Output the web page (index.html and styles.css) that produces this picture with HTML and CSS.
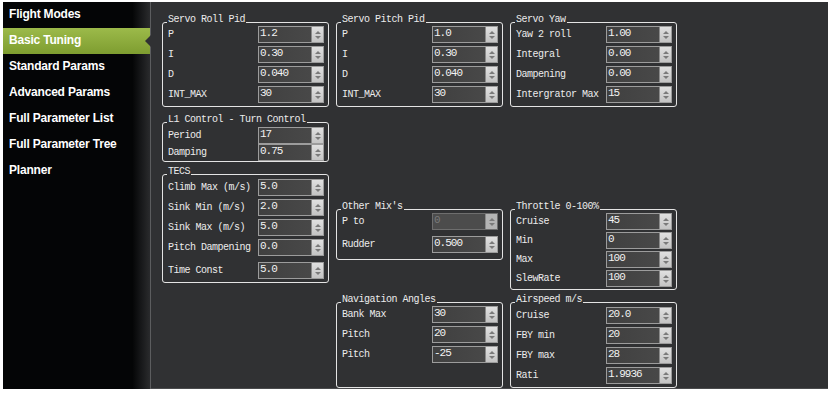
FILE: index.html
```html
<!DOCTYPE html>
<html lang="en">
<head>
  <meta charset="UTF-8">
  <title>Basic Tuning</title>
  <link rel="stylesheet" href="styles.css">
</head>
<body>
  <div class="window">
    <div class="sidebar">
      <div class="item">Flight Modes</div>
      <div class="item active">Basic Tuning</div>
      <div class="item">Standard Params</div>
      <div class="item">Advanced Params</div>
      <div class="item">Full Parameter List</div>
      <div class="item">Full Parameter Tree</div>
      <div class="item">Planner</div>
    </div>

    <div class="panel">
      <div class="col">
        <div class="group pid">
          <span class="title">Servo Roll Pid</span>
          <div class="row"><span class="label">P</span><div class="spinbox"><span class="value">1.2</span><div class="spin"><b class="up"></b><b class="down"></b></div></div></div>
          <div class="row"><span class="label">I</span><div class="spinbox"><span class="value">0.30</span><div class="spin"><b class="up"></b><b class="down"></b></div></div></div>
          <div class="row"><span class="label">D</span><div class="spinbox"><span class="value">0.040</span><div class="spin"><b class="up"></b><b class="down"></b></div></div></div>
          <div class="row"><span class="label">INT_MAX</span><div class="spinbox"><span class="value">30</span><div class="spin"><b class="up"></b><b class="down"></b></div></div></div>
        </div>

        <div class="group l1">
          <span class="title">L1 Control - Turn Control</span>
          <div class="row"><span class="label">Period</span><div class="spinbox"><span class="value">17</span><div class="spin"><b class="up"></b><b class="down"></b></div></div></div>
          <div class="row"><span class="label">Damping</span><div class="spinbox"><span class="value">0.75</span><div class="spin"><b class="up"></b><b class="down"></b></div></div></div>
        </div>

        <div class="group tecs">
          <span class="title">TECS</span>
          <div class="row"><span class="label">Climb Max (m/s)</span><div class="spinbox"><span class="value">5.0</span><div class="spin"><b class="up"></b><b class="down"></b></div></div></div>
          <div class="row"><span class="label">Sink Min (m/s)</span><div class="spinbox"><span class="value">2.0</span><div class="spin"><b class="up"></b><b class="down"></b></div></div></div>
          <div class="row"><span class="label">Sink Max (m/s)</span><div class="spinbox"><span class="value">5.0</span><div class="spin"><b class="up"></b><b class="down"></b></div></div></div>
          <div class="row"><span class="label">Pitch Dampening</span><div class="spinbox"><span class="value">0.0</span><div class="spin"><b class="up"></b><b class="down"></b></div></div></div>
          <div class="row last"><span class="label">Time Const</span><div class="spinbox"><span class="value">5.0</span><div class="spin"><b class="up"></b><b class="down"></b></div></div></div>
        </div>
      </div>

      <div class="col">
        <div class="group pid">
          <span class="title">Servo Pitch Pid</span>
          <div class="row"><span class="label">P</span><div class="spinbox"><span class="value">1.0</span><div class="spin"><b class="up"></b><b class="down"></b></div></div></div>
          <div class="row"><span class="label">I</span><div class="spinbox"><span class="value">0.30</span><div class="spin"><b class="up"></b><b class="down"></b></div></div></div>
          <div class="row"><span class="label">D</span><div class="spinbox"><span class="value">0.040</span><div class="spin"><b class="up"></b><b class="down"></b></div></div></div>
          <div class="row"><span class="label">INT_MAX</span><div class="spinbox"><span class="value">30</span><div class="spin"><b class="up"></b><b class="down"></b></div></div></div>
        </div>

        <div class="group mix">
          <span class="title">Other Mix's</span>
          <div class="row"><span class="label">P to</span><div class="spinbox disabled"><span class="value">0</span><div class="spin"><b class="up"></b><b class="down"></b></div></div></div>
          <div class="row"><span class="label">Rudder</span><div class="spinbox"><span class="value">0.500</span><div class="spin"><b class="up"></b><b class="down"></b></div></div></div>
        </div>

        <div class="group nav">
          <span class="title">Navigation Angles</span>
          <div class="row"><span class="label">Bank Max</span><div class="spinbox"><span class="value">30</span><div class="spin"><b class="up"></b><b class="down"></b></div></div></div>
          <div class="row"><span class="label">Pitch</span><div class="spinbox"><span class="value">20</span><div class="spin"><b class="up"></b><b class="down"></b></div></div></div>
          <div class="row"><span class="label">Pitch</span><div class="spinbox"><span class="value">-25</span><div class="spin"><b class="up"></b><b class="down"></b></div></div></div>
        </div>
      </div>

      <div class="col">
        <div class="group pid">
          <span class="title">Servo Yaw</span>
          <div class="row"><span class="label">Yaw 2 roll</span><div class="spinbox"><span class="value">1.00</span><div class="spin"><b class="up"></b><b class="down"></b></div></div></div>
          <div class="row"><span class="label">Integral</span><div class="spinbox"><span class="value">0.00</span><div class="spin"><b class="up"></b><b class="down"></b></div></div></div>
          <div class="row"><span class="label">Dampening</span><div class="spinbox"><span class="value">0.00</span><div class="spin"><b class="up"></b><b class="down"></b></div></div></div>
          <div class="row"><span class="label">Intergrator Max</span><div class="spinbox"><span class="value">15</span><div class="spin"><b class="up"></b><b class="down"></b></div></div></div>
        </div>

        <div class="group throttle">
          <span class="title">Throttle 0-100%</span>
          <div class="row"><span class="label">Cruise</span><div class="spinbox"><span class="value">45</span><div class="spin"><b class="up"></b><b class="down"></b></div></div></div>
          <div class="row"><span class="label">Min</span><div class="spinbox"><span class="value">0</span><div class="spin"><b class="up"></b><b class="down"></b></div></div></div>
          <div class="row"><span class="label">Max</span><div class="spinbox"><span class="value">100</span><div class="spin"><b class="up"></b><b class="down"></b></div></div></div>
          <div class="row"><span class="label">SlewRate</span><div class="spinbox"><span class="value">100</span><div class="spin"><b class="up"></b><b class="down"></b></div></div></div>
        </div>

        <div class="group airspeed">
          <span class="title">Airspeed m/s</span>
          <div class="row"><span class="label">Cruise</span><div class="spinbox"><span class="value">20.0</span><div class="spin"><b class="up"></b><b class="down"></b></div></div></div>
          <div class="row"><span class="label">FBY min</span><div class="spinbox"><span class="value">20</span><div class="spin"><b class="up"></b><b class="down"></b></div></div></div>
          <div class="row"><span class="label">FBY max</span><div class="spinbox"><span class="value">28</span><div class="spin"><b class="up"></b><b class="down"></b></div></div></div>
          <div class="row last"><span class="label">Rati</span><div class="spinbox"><span class="value">1.9936</span><div class="spin"><b class="up"></b><b class="down"></b></div></div></div>
        </div>
      </div>
    </div>
  </div>
</body>
</html>
```

FILE: styles.css
```css
body {
  margin: 0;
  padding: 2px 0 0 3px;
  background: #fff;
}

.window {
  width: 825px;
  height: 387px;
  display: flex;
  background: #303133;
}

.sidebar {
  width: 147px;
  flex-shrink: 0;
  background: linear-gradient(to right, #040506 88%, #2a2b2d);
  border-right: 1px solid #5c5d5f;
  font-family: "Liberation Sans", Arial, sans-serif;
  font-weight: bold;
  font-size: 12px;
  color: #fff;
}

.item {
  position: relative;
  height: 26px;
  line-height: 25px;
  padding-left: 6px;
  letter-spacing: -0.2px;
}

.item.active {
  background: linear-gradient(#9cba4a, #7e9d30);
}

.item.active::after {
  content: "";
  position: absolute;
  right: -1px;
  top: 7px;
  border-top: 6px solid transparent;
  border-bottom: 6px solid transparent;
  border-right: 6px solid #303133;
}

.panel {
  flex: 1;
  display: flex;
  gap: 7px;
  padding: 20px 0 0 11px;
  border-bottom: 1px solid #4a4b4d;
  font-family: "Liberation Mono", "DejaVu Sans Mono", monospace;
  color: #ececec;
}

.col {
  width: 167px;
  display: flex;
  flex-direction: column;
}

.group {
  position: relative;
  box-sizing: border-box;
  border: 1px solid #e4e4e4;
  border-radius: 3px;
  padding: 3px 4px 0 5px;
  display: flex;
  flex-direction: column;
  gap: 3px;
}

.title {
  position: absolute;
  top: -9px;
  left: 4px;
  padding: 0 1px;
  background: #303133;
  font-size: 10px;
  line-height: 12px;
  letter-spacing: -0.5px;
}

.row {
  display: flex;
  justify-content: space-between;
  height: 17px;
}

.label {
  padding-top: 2px;
  font-size: 10px;
  line-height: 14px;
  letter-spacing: -0.5px;
  white-space: nowrap;
}

.spinbox {
  width: 66px;
  box-sizing: border-box;
  border: 1px solid #9c9c9c;
  background: linear-gradient(to right, #404040, #4a4a4a);
  display: flex;
  justify-content: space-between;
}

.value {
  font-size: 11px;
  line-height: 13px;
  letter-spacing: -1px;
  padding-left: 1px;
  color: #f2f2f2;
}

.spin {
  width: 11px;
  background: linear-gradient(#e0e0e0, #c4c4c4);
  border-left: 1px solid #8a8a8a;
  display: flex;
  flex-direction: column;
  align-items: center;
  justify-content: center;
  gap: 2px;
}

.up,
.down {
  width: 0;
  height: 0;
  border-left: 3px solid transparent;
  border-right: 3px solid transparent;
}

.up {
  border-bottom: 3px solid #7a7a7a;
}

.down {
  border-top: 3px solid #7a7a7a;
}

.disabled {
  background: #4c4c4c;
  border-color: #6e6e6e;
}

.disabled .value {
  color: #7a7a7a;
}

.disabled .spin {
  background: #b4b4b4;
}

.pid {
  height: 85px;
}

.l1 {
  height: 40px;
  margin-top: 15px;
  padding-top: 4px;
  gap: 0;
}

.tecs {
  height: 109px;
  margin-top: 12px;
  padding-top: 4px;
}

.tecs .last {
  margin-top: 3px;
}

.mix {
  height: 51px;
  margin-top: 102px;
  gap: 6px;
}

.nav {
  height: 86px;
  margin-top: 42px;
}

.throttle {
  height: 81px;
  margin-top: 102px;
  gap: 2px;
}

.airspeed {
  height: 86px;
  margin-top: 12px;
  padding-top: 4px;
}
```
